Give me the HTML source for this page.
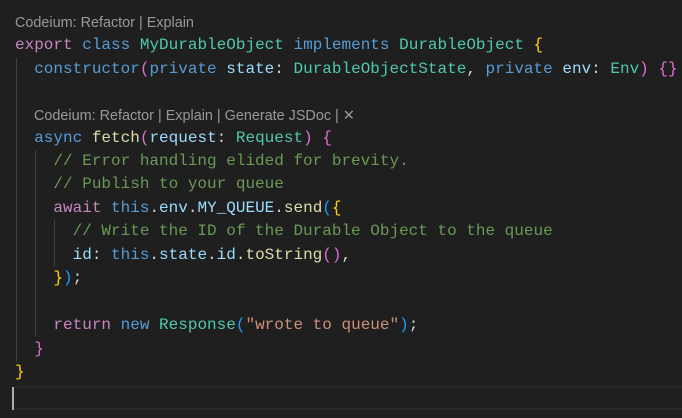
<!DOCTYPE html>
<html><head><style>
body{margin:0;width:682px;height:418px;background:#1f1f1f;overflow:hidden;position:relative}
.l{position:absolute;left:15px;font:16px/23px "Liberation Mono",monospace;color:#d4d4d4;white-space:pre}
.c{position:absolute;font:14.4px/16px "Liberation Sans",sans-serif;color:#999;white-space:pre}
.g{position:absolute;width:1px;background:#404040}
.k{color:#569cd6}.p{color:#c586c0}.t{color:#4ec9b0}.v{color:#9cdcfe}.f{color:#dcdcaa}.s{color:#ce9178}.m{color:#6a9955}
.y{color:#ffd700}.o{color:#da70d6}.b{color:#179fff}
</style></head><body>
<div class="c" style="left:15px;top:15px">Codeium: Refactor | Explain</div>
<div class="l" style="top:34px"><span class="p">export</span> <span class="k">class</span> <span class="t">MyDurableObject</span> <span class="k">implements</span> <span class="t">DurableObject</span> <span class="y">{</span></div>
<div class="l" style="top:58px">  <span class="k">constructor</span><span class="o">(</span><span class="k">private</span> <span class="v">state</span>: <span class="t">DurableObjectState</span>, <span class="k">private</span> <span class="v">env</span>: <span class="t">Env</span><span class="o">)</span> <span class="o">{}</span></div>
<div class="c" style="left:34px;top:108px">Codeium: Refactor | Explain | Generate JSDoc | ✕</div>
<div class="l" style="top:127px">  <span class="k">async</span> <span class="f">fetch</span><span class="o">(</span><span class="v">request</span>: <span class="t">Request</span><span class="o">)</span> <span class="o">{</span></div>
<div class="l" style="top:150px">    <span class="m">// Error handling elided for brevity.</span></div>
<div class="l" style="top:173px">    <span class="m">// Publish to your queue</span></div>
<div class="l" style="top:197px">    <span class="p">await</span> <span class="k">this</span>.<span class="v">env</span>.<span class="v">MY_QUEUE</span>.<span class="f">send</span><span class="b">(</span><span class="y">{</span></div>
<div class="l" style="top:220px">      <span class="m">// Write the ID of the Durable Object to the queue</span></div>
<div class="l" style="top:244px">      <span class="v">id</span>: <span class="k">this</span>.<span class="v">state</span>.<span class="v">id</span>.<span class="f">toString</span><span class="o">()</span>,</div>
<div class="l" style="top:267px">    <span class="y">}</span><span class="b">)</span>;</div>
<div class="l" style="top:314px">    <span class="p">return</span> <span class="k">new</span> <span class="t">Response</span><span class="b">(</span><span class="s">"wrote to queue"</span><span class="b">)</span>;</div>
<div class="l" style="top:338px">  <span class="o">}</span></div>
<div class="l" style="top:361px"><span class="y">}</span></div>
<div class="g" style="left:16px;top:58px;height:304px"></div>
<div class="g" style="left:35px;top:150px;height:187px"></div>
<div class="g" style="left:54px;top:220px;height:47px"></div>
<div style="position:absolute;left:12px;top:386px;width:670px;height:20px;border-top:2px solid #282828;border-bottom:2px solid #282828"></div>
<div style="position:absolute;left:12px;top:387px;width:2px;height:23px;background:#aeafad"></div>
</body></html>
